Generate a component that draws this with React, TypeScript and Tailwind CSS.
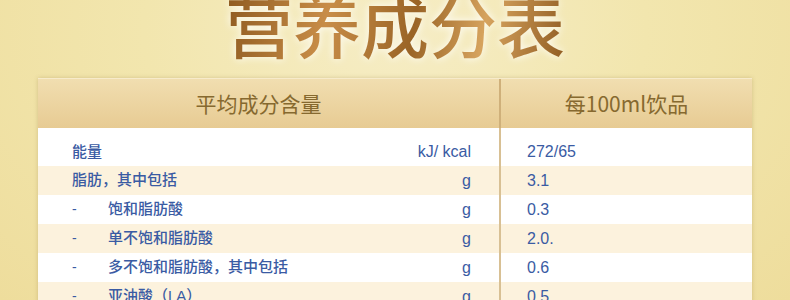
const rows = [
  { dash: false, label: "能量", unit: "kJ/ kcal", value: "272/65" },
  { dash: false, label: "脂肪，其中包括", unit: "g", value: "3.1" },
  { dash: true, label: "饱和脂肪酸", unit: "g", value: "0.3" },
  { dash: true, label: "单不饱和脂肪酸", unit: "g", value: "2.0." },
  { dash: true, label: "多不饱和脂肪酸，其中包括", unit: "g", value: "0.6" },
  { dash: true, label: "亚油酸（LA）", unit: "g", value: "0.5" },
];

const cjk = "font-['Liberation_Sans','Noto_Sans_CJK_SC',sans-serif]";

export default function App() {
  return (
    <div className="w-[790px] h-[300px] overflow-hidden bg-[radial-gradient(ellipse_at_50%_10%,#f6edc6_0%,#f2e6ae_45%,#eedd9c_100%)]">
      {/* Title */}
      <div className="h-[78px] flex justify-center">
        <h1
          className={`mt-[-10px] text-[68px] leading-none font-medium text-transparent bg-clip-text bg-[linear-gradient(100deg,#8e5a20_0%,#c88d48_30%,#9a6426_55%,#d6a35e_75%,#8e5a20_100%)] drop-shadow-[0_0_4px_rgba(255,255,255,0.95)] font-['Noto_Sans_CJK_SC',sans-serif]`}
        >
          营养成分表
        </h1>
      </div>

      {/* Table */}
      <div className={`mx-[38px] w-[714px] bg-white shadow-[0_0_4px_rgba(120,90,30,0.25)] ${cjk}`}>
        <div className="flex h-[50px] bg-[linear-gradient(to_bottom,#f1deb0,#e7cb93)] border-t border-[#f7ebcb] text-[#86692f] text-[21px] font-['Noto_Sans_CJK_SC',sans-serif]">
          <div className="w-[463px] flex items-center justify-center pr-[20px] border-r-2 border-[#cfb07a]">
            平均成分含量
          </div>
          <div className="flex-1 flex items-center justify-center">每100ml饮品</div>
        </div>

        {rows.map((r, i) => (
          <div
            key={i}
            className={`flex text-[#3a5ba3] ${i === 0 ? "h-[38px] pt-[9px]" : "h-[29px]"} ${i % 2 === 1 ? "bg-[#fcf2dd]" : "bg-white"}`}
          >
            <div
              className={`w-[463px] flex items-center pl-[34px] pr-[28px] border-r-2 border-[#d8c094] ${i === 0 ? "-mt-[9px] pt-[10px]" : ""}`}
            >
              {r.dash && <span className="w-[36px] text-[14px]">-</span>}
              <span className="text-[15px] font-medium">{r.label}</span>
              <span className="ml-auto text-[16px]">{r.unit}</span>
            </div>
            <div className="flex-1 flex items-center pl-[26px] text-[16px]">{r.value}</div>
          </div>
        ))}
      </div>
    </div>
  );
}
